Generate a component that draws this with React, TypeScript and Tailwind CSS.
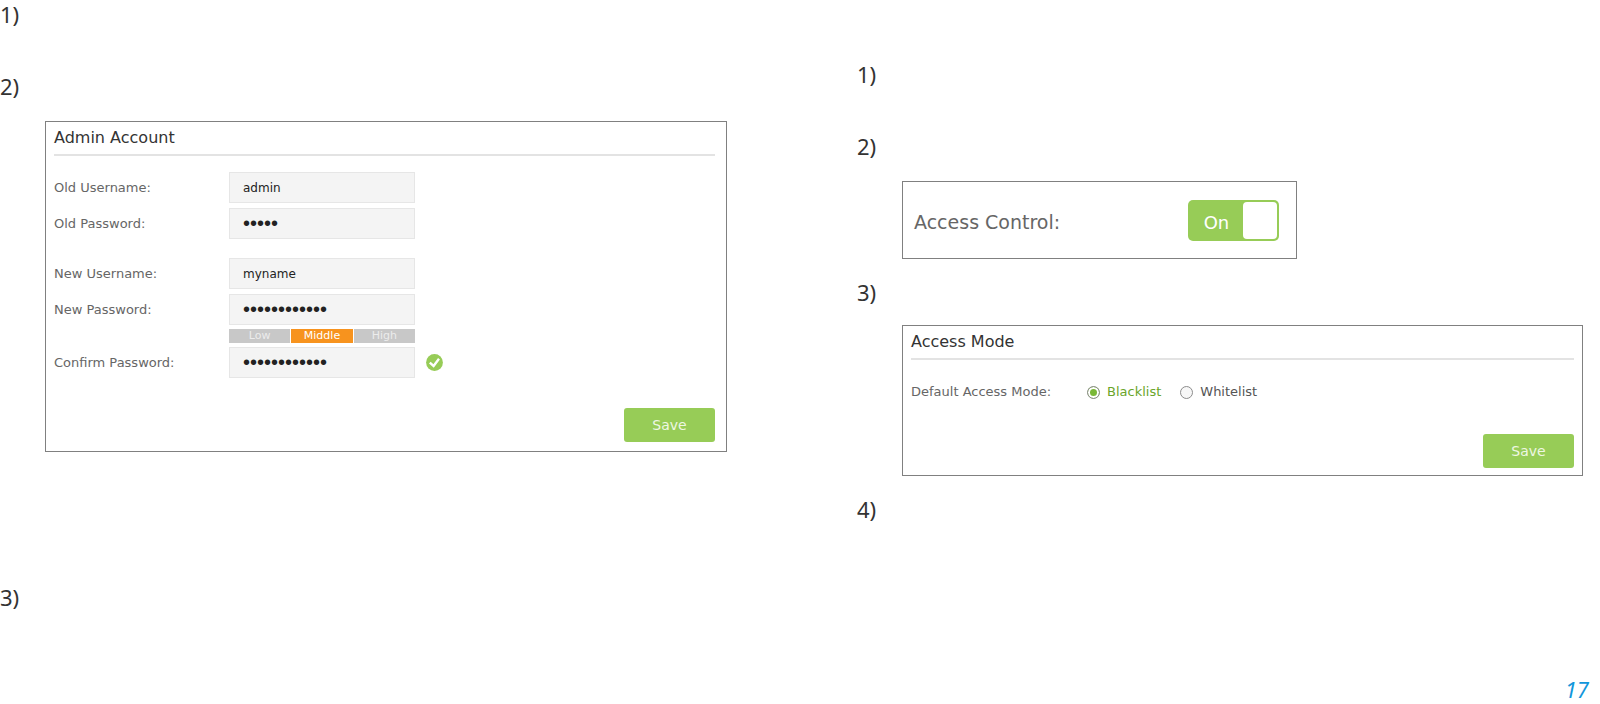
import { useState } from "react";
import type { ReactNode } from "react";

function Step({ n }: { n: number }) {
  return <p className="font-['Noto_Sans','Open_Sans',sans-serif] text-[22px] leading-6 text-[#333]">{n})</p>;
}

function Panel({ children, className = "" }: { children: ReactNode; className?: string }) {
  return <section className={`mb-[21px] ml-[45px] border border-[#808080] bg-white ${className}`}>{children}</section>;
}

function PanelTitle({ children }: { children: ReactNode }) {
  return (
    <h2 className="border-b-2 border-[#e3e3e3] pt-1 pb-1 text-[16px] leading-6 text-[#333]">{children}</h2>
  );
}

function SaveButton() {
  return (
    <button type="submit" className="h-[34px] w-[91px] rounded-[3px] bg-[#97cc57] text-[14px] text-[#eef7e2]">
      Save
    </button>
  );
}

interface FieldProps {
  id: string;
  label: string;
  type?: "text" | "password";
  initial: string;
  children?: ReactNode;
}

const inputFont = {
  text: "text-[12px]",
  password: "font-['Liberation_Sans',Arial,sans-serif] text-[20px]",
};

function Field({ id, label, type = "text", initial, children }: FieldProps) {
  return (
    <div className="flex items-center">
      <label htmlFor={id} className="w-[175px] shrink-0 text-[13px] text-[#666]">
        {label}
      </label>
      <input
        id={id}
        type={type}
        defaultValue={initial}
        autoComplete="off"
        className={`h-[31px] w-[186px] border border-[#e6e6e6] bg-[#f4f4f4] px-[13px] text-[#222] outline-none ${inputFont[type]}`}
      />
      {children}
    </div>
  );
}

function StrengthMeter() {
  return (
    <div className="ml-[175px] grid w-[186px] grid-cols-3 gap-px text-center text-[11px] leading-[14px] text-[#ececec]">
      <span className="bg-[#c8c8c8]">Low</span>
      <span className="bg-[#f7931e] text-white">Middle</span>
      <span className="bg-[#c8c8c8]">High</span>
    </div>
  );
}

function CheckIcon() {
  return (
    <svg viewBox="0 0 17 17" className="ml-[11px] size-[17px]" role="img" aria-label="Passwords match">
      <circle cx="8.5" cy="8.5" r="8.4" fill="#97cc57" />
      <path d="M3.8 8.6 7.6 12 13 4.8" fill="none" stroke="#fff" strokeWidth="2.4" />
    </svg>
  );
}

function AdminAccount() {
  return (
    <Panel className="mt-[23px] mr-[73px]">
      <form className="pr-[11px] pb-[9px] pl-2" onSubmit={(e) => e.preventDefault()}>
        <PanelTitle>Admin Account</PanelTitle>
        <div className="flex flex-col gap-[5px] pt-4">
          <Field id="old-user" label="Old Username:" initial="admin" />
          <Field id="old-pass" label="Old Password:" type="password" initial="admin" />
        </div>
        <div className="flex flex-col gap-[5px] pt-[19px]">
          <Field id="new-user" label="New Username:" initial="myname" />
          <div className="flex flex-col gap-1">
            <Field id="new-pass" label="New Password:" type="password" initial="mypassword12" />
            <StrengthMeter />
            <Field id="confirm-pass" label="Confirm Password:" type="password" initial="mypassword12">
              <CheckIcon />
            </Field>
          </div>
        </div>
        <div className="flex justify-end pt-[30px]">
          <SaveButton />
        </div>
      </form>
    </Panel>
  );
}

function AccessControl() {
  const [on, setOn] = useState(true);
  return (
    <Panel className="mt-[23px] flex h-[78px] w-[395px] items-center justify-between pr-[17px] pl-[11px]">
      <span id="access-control" className="pt-1 text-[19px] text-[#666]">
        Access Control:
      </span>
      <button
        type="button"
        role="switch"
        aria-checked={on}
        aria-labelledby="access-control"
        onClick={() => setOn(!on)}
        className="flex h-[41px] w-[91px] items-center rounded-[5px] bg-[#97cc57] p-[2px] text-[18px] text-white"
      >
        <span className="flex-1 pt-1 text-center">{on ? "On" : "Off"}</span>
        <span className="h-full w-[34px] rounded-[4px] bg-white" />
      </button>
    </Panel>
  );
}

function AccessMode() {
  const [mode, setMode] = useState("Blacklist");
  return (
    <Panel className="mt-[21px] mr-[17px]">
      <form className="pr-2 pb-[7px] pl-2" onSubmit={(e) => e.preventDefault()}>
        <PanelTitle>Access Mode</PanelTitle>
        <fieldset className="flex items-center pt-[22px] text-[13px] leading-5" aria-labelledby="mode-label">
          <span id="mode-label" className="w-44 shrink-0 text-[#666]">
            Default Access Mode:
          </span>
          {["Blacklist", "Whitelist"].map((m) => (
            <label
              key={m}
              className="mr-[19px] flex items-center gap-[7px] text-[#555] has-checked:text-[#6aa52a]"
            >
              <input
                type="radio"
                name="mode"
                checked={mode === m}
                onChange={() => setMode(m)}
                className="size-[13px] appearance-none rounded-full border border-[#8c8c8c] bg-[#f7f7f7] checked:bg-[#7ab837] checked:shadow-[inset_0_0_0_2px_#fff]"
              />
              {m}
            </label>
          ))}
        </fieldset>
        <div className="flex justify-end pt-8">
          <SaveButton />
        </div>
      </form>
    </Panel>
  );
}

export default function App() {
  return (
    <main className="grid min-h-screen grid-cols-2 bg-white font-['DejaVu_Sans',Verdana,sans-serif]">
      <div className="pt-[2px]">
        <Step n={1} />
        <div className="h-12" />
        <Step n={2} />
        <AdminAccount />
        <div className="h-28" />
        <Step n={3} />
      </div>
      <div className="flex flex-col pt-[62px] pl-[57px]">
        <Step n={1} />
        <div className="h-12" />
        <Step n={2} />
        <AccessControl />
        <Step n={3} />
        <AccessMode />
        <Step n={4} />
        <footer className="mt-auto pr-[11px] pb-[2px] text-right font-['Noto_Sans','Open_Sans',sans-serif] text-[22px] leading-[26px] text-[#1296db] italic">
          17
        </footer>
      </div>
    </main>
  );
}
